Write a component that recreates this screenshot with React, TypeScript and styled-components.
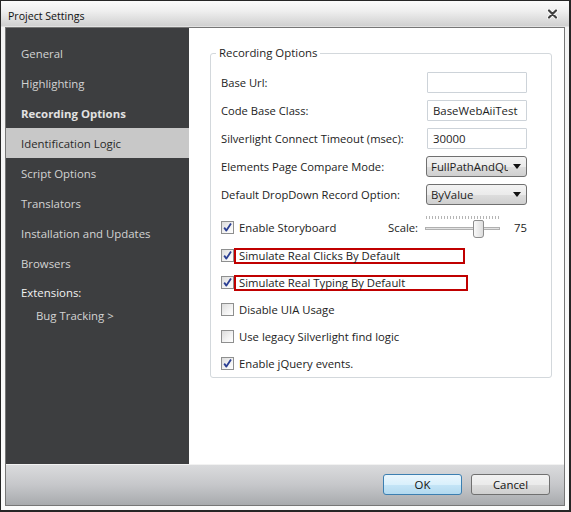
import React from "react";
import styled, { createGlobalStyle, css } from "styled-components";

const Global = createGlobalStyle`
  html, body { margin: 0; padding: 0; background: #ffffff; }
  body {
    font-family: "Open Sans", "Liberation Sans", sans-serif;
    font-size: 11.2px;
    color: #1e1e1e;
  }
  * { box-sizing: border-box; }
`;

const Window = styled.div`
  width: 571px;
  height: 512px;
  border: 1px solid #262626;
  border-right-width: 2px;
  border-bottom-width: 2px;
  padding: 0 4px 4px 4px;
  display: flex;
  flex-direction: column;
  background: linear-gradient(
    to bottom,
    #fbfbfb 0px,
    #efefef 10px,
    #d0d0d0 25px,
    #f3f3f3 26px,
    #fbfbfb 100%
  );
`;

const TitleBar = styled.div`
  height: 26px;
  flex: none;
  display: flex;
  align-items: center;
  justify-content: space-between;
  padding: 0 7px 0 3px;
`;

const Title = styled.span`
  font-size: 10.6px;
  color: #101010;
  padding-top: 3px;
`;

const Panel = styled.div`
  flex: 1;
  min-height: 0;
  display: flex;
  flex-direction: column;
  border: 1px solid #767676;
  background: #ffffff;
`;

const Main = styled.div`
  flex: 1;
  min-height: 0;
  display: flex;
`;

const Sidebar = styled.nav`
  width: 183px;
  flex: none;
  background: #3d3e40;
  padding-top: 10px;
  display: flex;
  flex-direction: column;
`;

const NavItem = styled.div<{ $selected?: boolean; $bold?: boolean }>`
  height: 30px;
  display: flex;
  align-items: center;
  padding-left: 15px;
  color: #d3d3d3;
  font-size: 11.4px;
  ${(p) =>
    p.$bold &&
    css`
      font-weight: 700;
      color: #e2e2e2;
    `}
  ${(p) =>
    p.$selected &&
    css`
      background: #c8c8c8;
      color: #2a2a2a;
    `}
`;

const NavHeader = styled.div`
  height: 28px;
  display: flex;
  align-items: center;
  padding-left: 15px;
  color: #f2f2f2;
  font-size: 11.4px;
`;

const NavSubItem = styled.div`
  height: 18px;
  display: flex;
  align-items: center;
  padding-left: 30px;
  color: #d3d3d3;
  font-size: 11.4px;
`;

const Pane = styled.div`
  flex: 1;
  min-width: 0;
  padding: 17px 12px 0 21px;
`;

const Group = styled.fieldset`
  margin: 0;
  min-width: 0;
  padding: 7px 24px 0 10px;
  border: 1px solid #d3d8dc;
  border-radius: 3px;
`;

const Legend = styled.legend`
  margin-left: -5px;
  padding: 0 3px;
  line-height: 16px;
  font-size: 11.4px;
  color: #1e1e1e;
`;

const FieldRow = styled.div`
  height: 28px;
  display: flex;
  align-items: center;
  justify-content: space-between;
`;

const Label = styled.span`
  color: #222222;
  white-space: nowrap;
`;

const TextBox = styled.input`
  width: 100px;
  height: 21px;
  margin: 0;
  padding: 0 5px;
  border: 1px solid #cdd3d9;
  border-radius: 1px;
  font: inherit;
  font-size: 11.4px;
  color: #1e1e1e;
  background: #ffffff;
  outline: none;
`;

const Select = styled.div`
  width: 101px;
  height: 21px;
  border: 1px solid #707070;
  border-radius: 3px;
  background: linear-gradient(to bottom, #f3f3f3 0%, #ebebeb 50%, #dddddd 51%, #cfcfcf 100%);
  display: flex;
  align-items: center;
  padding: 0 0 0 4px;
  font-size: 11.4px;
  color: #1e1e1e;
`;

const SelectText = styled.span`
  flex: 1;
  min-width: 0;
  overflow: hidden;
  white-space: nowrap;
`;

const SelectArrow = styled.span`
  width: 18px;
  flex: none;
  display: flex;
  align-items: center;
  justify-content: center;
`;

const StoryRow = styled.div`
  height: 30px;
  margin-top: 4px;
  display: flex;
  align-items: center;
`;

const CheckRow = styled.div`
  height: 27px;
  display: flex;
  align-items: center;
`;

const Box = styled.span`
  width: 13px;
  height: 13px;
  flex: none;
  border: 1px solid #8e8f8f;
  background: linear-gradient(135deg, #dcdcdc 0%, #f4f4f4 60%, #ffffff 100%);
  display: flex;
  align-items: center;
  justify-content: center;
  margin-right: 5px;
`;

const CheckText = styled.span`
  color: #222222;
  font-size: 11.3px;
  white-space: nowrap;
`;

const Marked = styled.span<{ $w: number }>`
  width: ${(p) => p.$w}px;
  height: 16px;
  margin-left: -5px;
  padding-left: 3px;
  border: 2px solid #c00000;
  display: flex;
  align-items: center;
  color: #222222;
  font-size: 11.3px;
  white-space: nowrap;
`;

const ScaleGroup = styled.div`
  margin-left: auto;
  display: flex;
  align-items: center;
`;

const ScaleLabel = styled.span`
  color: #222222;
  font-size: 11.3px;
  margin-right: 7px;
`;

const ScaleValue = styled.span`
  color: #222222;
  font-size: 11.3px;
  margin-left: 14px;
`;

const Footer = styled.div`
  height: 41px;
  flex: none;
  border-top: 1px solid #f2f2f2;
  background: linear-gradient(to bottom, #dadbdd 0%, #c6c7ca 50%, #a8aaad 100%);
  display: flex;
  align-items: center;
  justify-content: flex-end;
  gap: 9px;
  padding: 0 14px 1px 0;
`;

const Button = styled.button<{ $primary?: boolean }>`
  width: 79px;
  height: 21px;
  margin: 0;
  padding: 0;
  border-radius: 3px;
  font: inherit;
  font-size: 11.4px;
  color: #111111;
  border: 1px solid #707070;
  background: linear-gradient(to bottom, #f2f2f2 0%, #ebebeb 50%, #dddddd 51%, #cfcfcf 100%);
  ${(p) =>
    p.$primary &&
    css`
      border-color: #3c7fb1;
      background: linear-gradient(to bottom, #eaf6fd 0%, #d9f0fc 50%, #c4e5f7 51%, #b3d9ef 100%);
    `}
`;

const CloseIcon = () => (
  <svg width="11" height="10" viewBox="0 0 11 10">
    <path d="M2 1.5 L9 8.5 M9 1.5 L2 8.5" stroke="#ffffff" strokeWidth="3.8" strokeLinecap="round" />
    <path d="M2 1.5 L9 8.5 M9 1.5 L2 8.5" stroke="#3f3f3f" strokeWidth="2.2" strokeLinecap="round" />
  </svg>
);

const Tick = () => (
  <svg width="11" height="11" viewBox="0 0 11 11">
    <path d="M2.2 5.6 L4.4 8.6 L9 1.6" fill="none" stroke="#2b3f93" strokeWidth="1.8" strokeLinejoin="round" />
  </svg>
);

const Arrow = () => (
  <svg width="8" height="5" viewBox="0 0 8 5">
    <path d="M0 0 H8 L4 5 Z" fill="#111111" />
  </svg>
);

const Slider = () => {
  const ticks = [];
  for (let i = 0; i <= 24; i++) {
    const x = 1.5 + i * 3;
    ticks.push(<line key={i} x1={x} y1="4" x2={x} y2="7" stroke="#b5b5b5" strokeWidth="1" />);
  }
  return (
    <svg width="75" height="30" viewBox="0 0 75 30">
      {ticks}
      <rect x="0.5" y="15.5" width="74" height="2" fill="#e2e2e2" stroke="#b0b0b0" strokeWidth="1" />
      <defs>
        <linearGradient id="thumb" x1="0" y1="0" x2="1" y2="0">
          <stop offset="0" stopColor="#fafafa" />
          <stop offset="1" stopColor="#dcdcdc" />
        </linearGradient>
      </defs>
      <path
        d="M48.5 10 Q48.5 8.5 50 8.5 H57 Q58.5 8.5 58.5 10 V23 Q58.5 25.5 56 25.5 H51 Q48.5 25.5 48.5 23 Z"
        fill="url(#thumb)"
        stroke="#8d8d8d"
        strokeWidth="1"
      />
    </svg>
  );
};

const navItems = [
  "General",
  "Highlighting",
  "Recording Options",
  "Identification Logic",
  "Script Options",
  "Translators",
  "Installation and Updates",
  "Browsers",
];

type Check = { label: string; checked: boolean; mark?: number };

const checks: Check[] = [
  { label: "Simulate Real Clicks By Default", checked: true, mark: 231 },
  { label: "Simulate Real Typing By Default", checked: true, mark: 234 },
  { label: "Disable UIA Usage", checked: false },
  { label: "Use legacy Silverlight find logic", checked: false },
  { label: "Enable jQuery events.", checked: true },
];

export default function App() {
  return (
    <>
      <Global />
      <Window>
        <TitleBar>
          <Title>Project Settings</Title>
          <CloseIcon />
        </TitleBar>
        <Panel>
          <Main>
            <Sidebar>
              {navItems.map((n) => (
                <NavItem
                  key={n}
                  $bold={n === "Recording Options"}
                  $selected={n === "Identification Logic"}
                >
                  {n}
                </NavItem>
              ))}
              <NavHeader>Extensions:</NavHeader>
              <NavSubItem>Bug Tracking &gt;</NavSubItem>
            </Sidebar>
            <Pane>
              <Group>
                <Legend>Recording Options</Legend>
                <FieldRow>
                  <Label>Base Url:</Label>
                  <TextBox readOnly defaultValue="" />
                </FieldRow>
                <FieldRow>
                  <Label>Code Base Class:</Label>
                  <TextBox readOnly defaultValue="BaseWebAiiTest" />
                </FieldRow>
                <FieldRow>
                  <Label>Silverlight Connect Timeout (msec):</Label>
                  <TextBox readOnly defaultValue="30000" />
                </FieldRow>
                <FieldRow>
                  <Label>Elements Page Compare Mode:</Label>
                  <Select>
                    <SelectText>FullPathAndQuery</SelectText>
                    <SelectArrow>
                      <Arrow />
                    </SelectArrow>
                  </Select>
                </FieldRow>
                <FieldRow>
                  <Label>Default DropDown Record Option:</Label>
                  <Select>
                    <SelectText>ByValue</SelectText>
                    <SelectArrow>
                      <Arrow />
                    </SelectArrow>
                  </Select>
                </FieldRow>
                <StoryRow>
                  <Box>
                    <Tick />
                  </Box>
                  <CheckText>Enable Storyboard</CheckText>
                  <ScaleGroup>
                    <ScaleLabel>Scale:</ScaleLabel>
                    <Slider />
                    <ScaleValue>75</ScaleValue>
                  </ScaleGroup>
                </StoryRow>
                {checks.map((c) => (
                  <CheckRow key={c.label}>
                    <Box>{c.checked && <Tick />}</Box>
                    {c.mark ? (
                      <Marked $w={c.mark}>{c.label}</Marked>
                    ) : (
                      <CheckText>{c.label}</CheckText>
                    )}
                  </CheckRow>
                ))}
              </Group>
            </Pane>
          </Main>
          <Footer>
            <Button $primary>OK</Button>
            <Button>Cancel</Button>
          </Footer>
        </Panel>
      </Window>
    </>
  );
}
